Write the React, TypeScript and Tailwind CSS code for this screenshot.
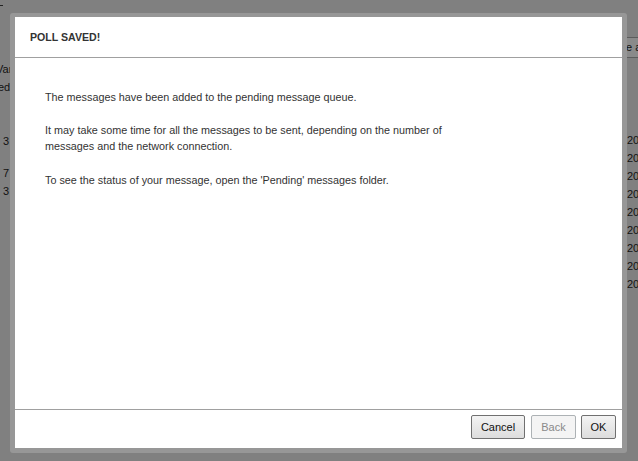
import React from 'react';

const rows = ['20', '20', '20', '20', '20', '20', '20', '20', '20'];

function Button({ label, width, disabled }: { label: string; width: string; disabled?: boolean }) {
  return (
    <button
      disabled={disabled}
      className={`${width} h-[24px] rounded-[2px] border text-[11px] leading-none ${
        disabled
          ? 'border-[#adb2b5] bg-[#f4f4f4] text-[#8a8a8a]'
          : 'border-[#707070] bg-gradient-to-b from-[#f3f3f3] to-[#dddddd] text-[#111]'
      }`}
    >
      {label}
    </button>
  );
}

export default function App() {
  return (
    <div className="relative w-[638px] h-[461px] overflow-hidden bg-[#808080] font-['Liberation_Sans',Arial,sans-serif] text-[11px]">
      {/* dimmed page underneath */}
      <div className="flex h-full">
        <div className="w-[14px] shrink-0 text-[#111] leading-[18px] whitespace-nowrap">
          <div className="mt-[5px] h-px w-[3px] bg-[#222]" />
          <div className="mt-[54px] -ml-[4px]">Var</div>
          <div className="-ml-[2px]">ed</div>
          <div className="mt-[36px] pl-[3px]">3</div>
          <div className="mt-[14px] pl-[3px]">7</div>
          <div className="pl-[3px]">3</div>
        </div>
        <div className="flex-1" />
        <div className="w-[16px] shrink-0 text-[#111]">
          <div className="mt-[37px] h-[21px] border-y border-[#5c5c5c] bg-[#8a8a8a] pl-[4px] leading-[19px] whitespace-nowrap">e a</div>
          <div className="mt-[73px] flex flex-col">
            {rows.map((r, i) => (
              <div key={i} className="h-[18px] pl-[5px] leading-[18px]">{r}</div>
            ))}
          </div>
        </div>
      </div>

      {/* dialog */}
      <div className="absolute left-[10px] top-[13px] w-[617px] h-[440px] rounded-[3px] bg-[#979797] pt-[4px] pl-[5px] pr-[5px] pb-[5px]">
        <div className="flex h-full flex-col bg-white">
          <div className="flex h-[41px] items-center border-b border-[#a0a0a0] pl-[15px] pt-[1px] text-[10.6px] font-bold text-[#333]">
            POLL SAVED!
          </div>
          <div className="flex-1 pl-[30px] pt-[31px] text-[10.8px] leading-[16px] text-[#333]">
            <p className="mb-[17px]">The messages have been added to the pending message queue.</p>
            <p className="mb-[18px]">
              It may take some time for all the messages to be sent, depending on the number of
              <br />
              messages and the network connection.
            </p>
            <p>To see the status of your message, open the 'Pending' messages folder.</p>
          </div>
          <div className="flex h-[39px] justify-end gap-[5px] border-t border-[#a0a0a0] pt-[5px] pr-[6px]">
            <Button label="Cancel" width="w-[54px] mr-[1px]" />
            <Button label="Back" width="w-[45px]" disabled />
            <Button label="OK" width="w-[35px]" />
          </div>
        </div>
      </div>
    </div>
  );
}
